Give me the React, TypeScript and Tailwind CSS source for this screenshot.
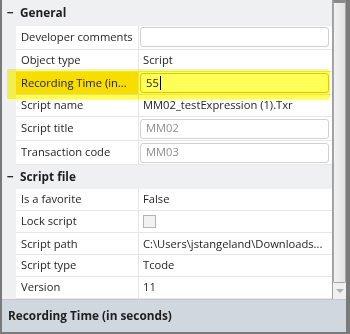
import React from "react";

type Row = {
  label: string;
  value?: string;
  kind?: "text" | "input" | "placeholder" | "check";
  h: string;
};

const general: Row[] = [
  { label: "Developer comments", value: "", kind: "input", h: "h-[24px]" },
  { label: "Object type", value: "Script", h: "h-[22px]" },
  { label: "Recording Time (in...", value: "55", kind: "input", h: "h-[24px]" },
  { label: "Script name", value: "MM02_testExpression (1).Txr", h: "h-[22px]" },
  { label: "Script title", value: "MM02", kind: "placeholder", h: "h-[24px]" },
  { label: "Transaction code", value: "MM03", kind: "placeholder", h: "h-[24px]" },
];

const scriptFile: Row[] = [
  { label: "Is a favorite", value: "False", h: "h-[22px]" },
  { label: "Lock script", kind: "check", h: "h-[23px]" },
  { label: "Script path", value: "C:\\Users\\jstangeland\\Downloads...", h: "h-[22px]" },
  { label: "Script type", value: "Tcode", h: "h-[22px]" },
  { label: "Version", value: "11", h: "h-[22px]" },
];

const Header = ({ title, h }: { title: string; h: string }) => (
  <div className={`flex items-center ${h} bg-[#eef0f2]`}>
    <span className="w-[18px] pl-[5px] text-[12px] font-bold">−</span>
    <span className="text-[11.8px] font-bold">{title}</span>
  </div>
);

const PropRow = ({ row, hl }: { row: Row; hl?: boolean }) => (
  <div className={`flex ${row.h}`}>
    <div className="w-[14px] shrink-0 bg-[#eef0f2]"></div>
    <div
      className={`flex w-[123px] shrink-0 items-center border-r border-b border-[#e6e6e6] pl-[5px] ${
        hl ? "bg-[#f7dd00]" : "bg-white"
      }`}
    >
      <span className="whitespace-nowrap">{row.label}</span>
    </div>
    <div className="flex min-w-0 flex-1 items-center border-b border-[#e6e6e6] bg-white">
      {row.kind === "input" || row.kind === "placeholder" ? (
        <div
          className={`ml-px mr-[3px] flex h-[20px] flex-1 items-center rounded-[3px] border pl-[5px] ${
            hl ? "border-[#e8c400] bg-white" : "border-[#d0d0d0] bg-white"
          } ${row.kind === "placeholder" ? "text-[#8c8c8c]" : ""}`}
        >
          {row.value}
          {hl && <span className="ml-px h-[14px] w-px bg-black"></span>}
        </div>
      ) : row.kind === "check" ? (
        <div className="ml-[4px] h-[13px] w-[13px] border border-[#b4b4b4] bg-[#f2f2f2]"></div>
      ) : (
        <span className="whitespace-nowrap pl-[4px]">{row.value}</span>
      )}
    </div>
  </div>
);

export default function App() {
  return (
    <div
      className="relative flex h-[334px] w-[350px] flex-col border-b-2 border-l-2 border-r-4 border-[#7a7a7a] bg-[#eef0f2] text-[11.2px] text-[#1e1e1e]"
      style={{ fontFamily: '"Open Sans", "Noto Sans", sans-serif' }}
    >
      <div className="flex h-[299px]">
        <div className="flex min-w-0 flex-1 flex-col overflow-hidden">
          <Header title="General" h="h-[26px]" />
          {general.map((r) => (
            <PropRow key={r.label} row={r} hl={r.value === "55"} />
          ))}
          <Header title="Script file" h="h-[24px]" />
          {scriptFile.map((r) => (
            <PropRow key={r.label} row={r} />
          ))}
        </div>
        <div className="flex w-[14px] shrink-0 flex-col border-l border-[#a0a0a0] bg-[#f0f0f0]">
          <div className="h-[283px] rounded-b-[2px] border border-t-[3px] border-[#a6a6a6] border-t-[#8a8a8a] bg-gradient-to-r from-[#f2f2f2] to-[#e2e2e2]"></div>
          <div className="flex flex-1 items-center justify-center">
            <div className="h-0 w-0 border-x-[4px] border-t-[4px] border-x-transparent border-t-[#b0b0b0]"></div>
          </div>
        </div>
      </div>
      <div className="flex flex-1 items-center border-t border-[#c0c7cf] bg-[#d0d7df] pl-[6px]">
        <span className="text-[11.8px] font-bold">Recording Time (in seconds)</span>
      </div>
      <div className="pointer-events-none absolute left-[5px] top-[69px] h-[30px] w-[323px] rounded-[2px] bg-[#ffff55] mix-blend-multiply"></div>
    </div>
  );
}
